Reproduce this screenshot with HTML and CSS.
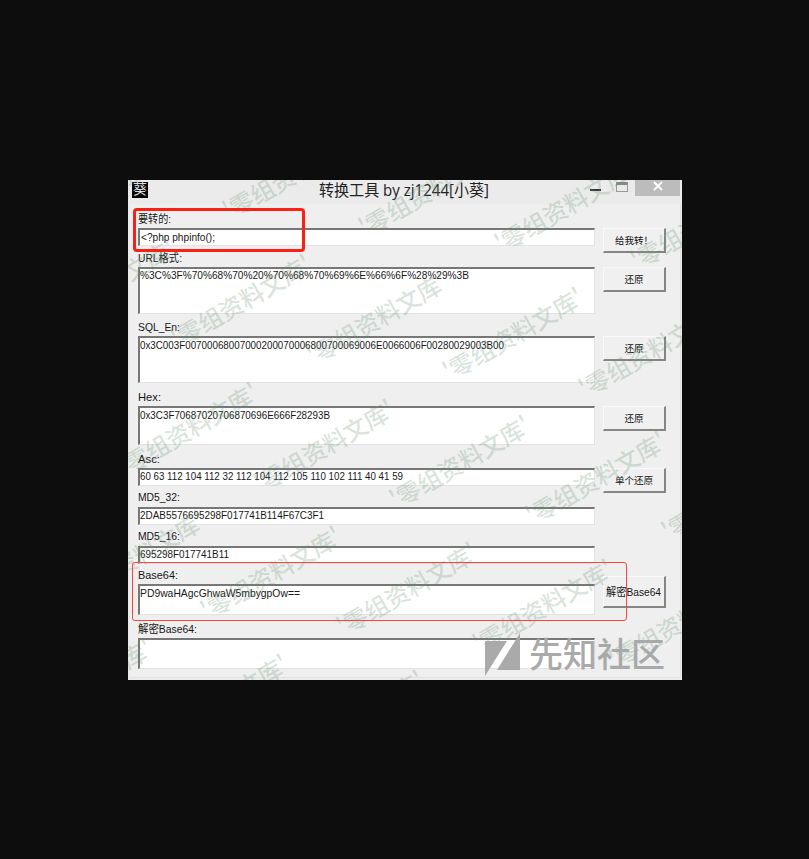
FILE: index.html
```html
<!DOCTYPE html>
<html lang="zh-CN">
<head>
<meta charset="utf-8">
<title>转换工具</title>
<link rel="stylesheet" href="styles.css">
</head>
<body>
<main class="window">
  <header class="titlebar">
    <span class="app-icon">葵</span>
    <h1><svg width="172" height="24"><text x="0" y="16" textLength="170" lengthAdjust="spacingAndGlyphs">转换工具 by zj1244[小葵]</text></svg></h1>
    <div class="controls">
      <i class="minimize"></i><i class="maximize"></i>
      <span class="close"><svg width="10" height="10" viewBox="0 0 10 10"><path d="M1 1l8 8M9 1L1 9"/></svg></span>
    </div>
  </header>
  <div class="form">
    <section class="row">
      <label><svg><text x="0" y="12" textLength="33" lengthAdjust="spacingAndGlyphs">要转的:</text></svg></label>
      <div class="field"><svg><text x="1" y="11" textLength="74" lengthAdjust="spacingAndGlyphs">&lt;?php phpinfo();</text></svg></div><button>给我转！</button>
    </section>
    <section class="row tall">
      <label><svg><text x="0" y="12" textLength="44" lengthAdjust="spacingAndGlyphs">URL格式:</text></svg></label>
      <div class="field"><svg><text x="0" y="10" textLength="329" lengthAdjust="spacingAndGlyphs">%3C%3F%70%68%70%20%70%68%70%69%6E%66%6F%28%29%3B</text></svg></div><button>还原</button>
    </section>
    <section class="row tall sql">
      <label><svg><text x="0" y="12" textLength="42" lengthAdjust="spacingAndGlyphs">SQL_En:</text></svg></label>
      <div class="field"><svg><text x="0" y="11" textLength="364" lengthAdjust="spacingAndGlyphs">0x3C003F00700068007000200070006800700069006E0066006F00280029003B00</text></svg></div><button>还原</button>
    </section>
    <section class="row hex">
      <label><svg><text x="0" y="12" textLength="23" lengthAdjust="spacingAndGlyphs">Hex:</text></svg></label>
      <div class="field"><svg><text x="0" y="11" textLength="190" lengthAdjust="spacingAndGlyphs">0x3C3F70687020706870696E666F28293B</text></svg></div><button>还原</button>
    </section>
    <section class="row">
      <label><svg><text x="0" y="12" textLength="22" lengthAdjust="spacingAndGlyphs">Asc:</text></svg></label>
      <div class="field"><svg><text x="0" y="10" textLength="263" lengthAdjust="spacingAndGlyphs">60 63 112 104 112 32 112 104 112 105 110 102 111 40 41 59</text></svg></div><button>单个还原</button>
    </section>
    <section class="row">
      <label><svg><text x="0" y="11" textLength="42" lengthAdjust="spacingAndGlyphs">MD5_32:</text></svg></label>
      <div class="field"><svg><text x="0" y="10" textLength="184" lengthAdjust="spacingAndGlyphs">2DAB5576695298F017741B114F67C3F1</text></svg></div>
    </section>
    <section class="row md16">
      <label><svg><text x="0" y="11" textLength="42" lengthAdjust="spacingAndGlyphs">MD5_16:</text></svg></label>
      <div class="field"><svg><text x="0" y="10" textLength="89" lengthAdjust="spacingAndGlyphs">695298F017741B11</text></svg></div>
    </section>
    <section class="row base">
      <label><svg><text x="0" y="12" textLength="40" lengthAdjust="spacingAndGlyphs">Base64:</text></svg></label>
      <div class="field"><svg><text x="0" y="11" textLength="160" lengthAdjust="spacingAndGlyphs">PD9waHAgcGhwaW5mbygpOw==</text></svg></div><button><svg width="56" height="18"><text x="0" y="13" textLength="55" lengthAdjust="spacingAndGlyphs">解密Base64</text></svg></button>
    </section>
    <section class="row decode">
      <label><svg><text x="0" y="12" textLength="59" lengthAdjust="spacingAndGlyphs">解密Base64:</text></svg></label>
      <div class="field"></div>
    </section>
  </div>
  <svg class="watermarks" viewBox="128 180 554 500">
    <defs><text id="mark" textLength="157">'零组资料文库'</text></defs>
    <g transform="translate(4 6)">
      <use href="#mark" transform="translate(90 199) rotate(-30)"/>
      <use href="#mark" transform="translate(226 215) rotate(-30)"/>
      <use href="#mark" transform="translate(362 232) rotate(-30)"/>
      <use href="#mark" transform="translate(498 248) rotate(-30)"/>
      <use href="#mark" transform="translate(634 265) rotate(-30)"/>
      <use href="#mark" transform="translate(38 327) rotate(-30)"/>
      <use href="#mark" transform="translate(174 343) rotate(-30)"/>
      <use href="#mark" transform="translate(310 360) rotate(-30)"/>
      <use href="#mark" transform="translate(446 376) rotate(-30)"/>
      <use href="#mark" transform="translate(582 393) rotate(-30)"/>
      <use href="#mark" transform="translate(121 471) rotate(-30)"/>
      <use href="#mark" transform="translate(257 488) rotate(-30)"/>
      <use href="#mark" transform="translate(393 504) rotate(-30)"/>
      <use href="#mark" transform="translate(529 520) rotate(-30)"/>
      <use href="#mark" transform="translate(665 536) rotate(-30)"/>
      <use href="#mark" transform="translate(68 599) rotate(-30)"/>
      <use href="#mark" transform="translate(204 615) rotate(-30)"/>
      <use href="#mark" transform="translate(340 631) rotate(-30)"/>
      <use href="#mark" transform="translate(476 648) rotate(-30)"/>
      <use href="#mark" transform="translate(612 664) rotate(-30)"/>
      <use href="#mark" transform="translate(15 727) rotate(-30)"/>
      <use href="#mark" transform="translate(151 743) rotate(-30)"/>
      <use href="#mark" transform="translate(287 759) rotate(-30)"/>
    </g>
  </svg>
  <div class="brand">
    <svg width="35" height="44" viewBox="0 0 35 44"><path d="M0 8h22L0 43zM35 0v37H12z"/></svg>
    <span>先知社区</span>
  </div>
  <i class="outline input-outline"></i>
  <i class="outline result-outline"></i>
</main>
</body>
</html>
```
FILE: styles.css
```css
* { box-sizing: border-box; }
body {
  margin: 0;
  height: 859px;
  padding: 180px 0 0 128px;
  background: #0d0d0d;
  overflow: hidden;
  font-family: "Liberation Sans", "Noto Sans CJK SC", sans-serif;
}
.window {
  position: relative;
  width: 554px;
  height: 500px;
  background: #ebebeb;
  overflow: hidden;
}
.titlebar {
  display: flex;
  height: 24px;
  padding-left: 4px;
}
.app-icon {
  width: 16px;
  height: 16px;
  margin-top: 2px;
  background: #080808;
  color: #ddd;
  font-size: 14px;
  line-height: 15px;
  text-align: center;
}
h1 {
  margin: 0 0 0 171px;
  width: 172px;
  height: 24px;
}
h1 svg { display: block; overflow: visible; }
h1 text {
  font: 400 16px "Open Sans", "Noto Sans CJK SC", sans-serif;
  fill: #222;
}
.controls {
  display: flex;
  margin-left: auto;
  padding-right: 2px;
}
.minimize { width: 11px; height: 2px; margin: 9px 15px 0 0; background: #333; }
.maximize { width: 12px; height: 10px; margin: 2px 7px 0 0; border: 1px solid #999; border-top: 3px solid #888; }
.close {
  display: flex;
  justify-content: center;
  width: 45px;
  height: 16px;
  padding-top: 1px;
  background: #bcbcbc;
}
.close path { fill: none; stroke: #fff; stroke-width: 2; }
.form {
  width: 551px;
  margin-left: 2px;
  height: 474px;
  padding: 7px 0 0 8px;
  background: #efefef;
  border: solid #e3e3e3;
  border-width: 0 1px 1px 0;
}
.row {
  display: grid;
  grid-template: 17px 18px / 457px 63px;
  column-gap: 8px;
  height: 39px;
}
.row.tall { height: 69px; grid-template-rows: 17px 47px; }
.row.sql { height: 70px; }
.row.hex { height: 62px; grid-template-rows: 17px 39px; }
.row.md16 { height: 38px; }
.row.base { height: 54px; grid-template-rows: 17px 31px; }
.row.decode { height: 50px; grid-template-rows: 17px 31px; }
label { grid-column: 1 / 3; height: 17px; }
label svg, .field svg { display: block; width: 100%; height: 15px; overflow: visible; }
.form text { font-size: 11px; fill: #171717; }
.field {
  background: #fff;
  border: solid;
  border-width: 2px 1px 1px 2px;
  border-color: #777 #e2e2e2 #e2e2e2 #777;
}
button {
  display: flex;
  align-items: center;
  justify-content: center;
  width: 63px;
  height: 25px;
  padding: 0;
  background: #f0f0f0;
  border: solid;
  border-width: 1px 2px 2px 1px;
  border-color: #f9f9f9 #858585 #858585 #f9f9f9;
  font: 9.5px "Noto Sans CJK SC", sans-serif;
  color: #111;
}
.base button { height: 32px; margin-top: -8px; }
button svg { overflow: visible; }
button text { font-family: "Liberation Sans", "Noto Sans CJK SC", sans-serif; }
.watermarks { position: absolute; left: 0; top: 0; width: 554px; height: 500px; }
.watermarks text {
  font: 500 24px "Noto Sans CJK SC", sans-serif;
  fill: rgba(105, 145, 112, .25);
}
.brand {
  position: absolute;
  left: 357px;
  top: 453px;
  display: flex;
  gap: 9px;
  color: #a6a6a6;
  font: 500 34px/40px "Noto Sans CJK SC", sans-serif;
  opacity: .95;
}
.brand path { fill: #a6a6a6; }
.outline { position: absolute; }
.input-outline {
  left: 5px;
  top: 28px;
  width: 172px;
  height: 44px;
  border: 3px solid #fb2015;
  border-radius: 4px;
}
.result-outline {
  left: 4px;
  top: 382px;
  width: 495px;
  height: 59px;
  border: 1px solid #f8463c;
  border-radius: 3px;
}
```
